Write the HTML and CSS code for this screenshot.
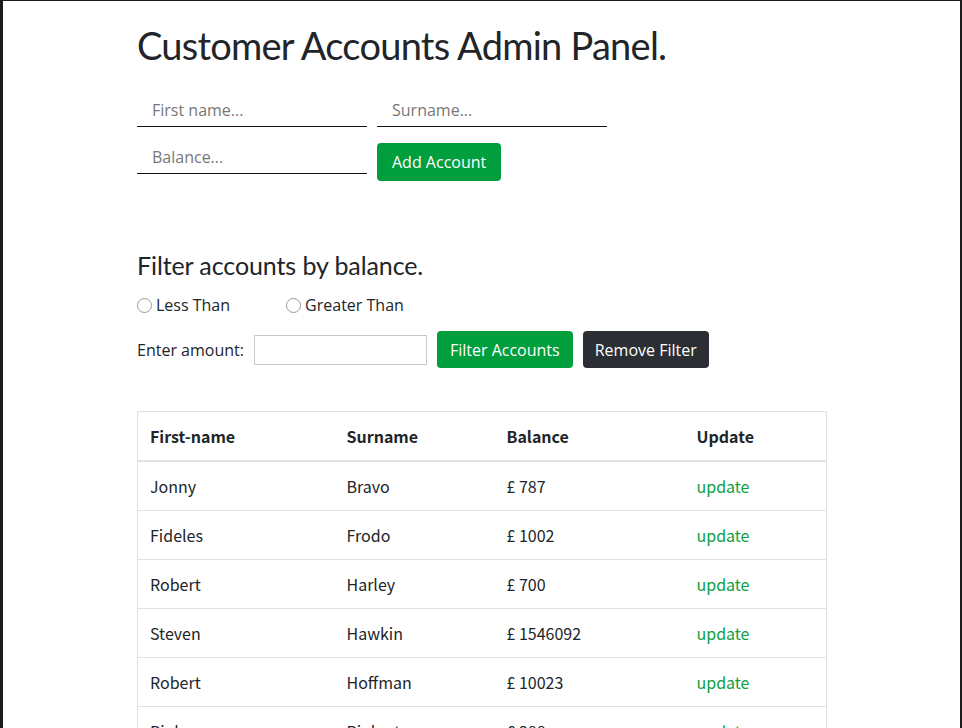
FILE: index.html
```html
<!DOCTYPE html>
<html>
<head>
<meta charset="utf-8">
<link rel="stylesheet" href="styles.css">
</head>
<body>
<div class="frame">
  <div class="container">
    <h1 class="title">Customer Accounts Admin Panel.</h1>
    <div class="add-form">
      <div class="form-row">
        <input class="line-input" type="text" placeholder="First name...">
        <input class="line-input" type="text" placeholder="Surname...">
      </div>
      <div class="form-row">
        <input class="line-input" type="text" placeholder="Balance...">
        <button class="btn btn-green btn-add">Add Account</button>
      </div>
    </div>

    <h2 class="subtitle">Filter accounts by balance.</h2>
    <div class="radios">
      <label class="radio"><span class="radio-circle"></span>Less Than</label>
      <label class="radio radio-second"><span class="radio-circle"></span>Greater Than</label>
    </div>
    <div class="filter-row">
      <span class="amount-label">Enter amount:</span>
      <input class="box-input" type="text">
      <button class="btn btn-green">Filter Accounts</button>
      <button class="btn btn-dark">Remove Filter</button>
    </div>

    <table class="accounts">
      <colgroup>
        <col class="c1"><col class="c2"><col class="c3"><col class="c4">
      </colgroup>
      <thead>
        <tr><th>First-name</th><th>Surname</th><th>Balance</th><th>Update</th></tr>
      </thead>
      <tbody>
        <tr><td>Jonny</td><td>Bravo</td><td>£ 787</td><td><a class="upd">update</a></td></tr>
        <tr><td>Fideles</td><td>Frodo</td><td>£ 1002</td><td><a class="upd">update</a></td></tr>
        <tr><td>Robert</td><td>Harley</td><td>£ 700</td><td><a class="upd">update</a></td></tr>
        <tr><td>Steven</td><td>Hawkin</td><td>£ 1546092</td><td><a class="upd">update</a></td></tr>
        <tr><td>Robert</td><td>Hoffman</td><td>£ 10023</td><td><a class="upd">update</a></td></tr>
        <tr><td>Pinky</td><td>Pinkerton</td><td>£ 388</td><td><a class="upd">update</a></td></tr>
      </tbody>
    </table>
  </div>
</div>
</body>
</html>
```

FILE: styles.css
```css
html, body {
  margin: 0;
  padding: 0;
  height: 100%;
  overflow: hidden;
}
body {
  background: #ffffff;
  font-family: "Open Sans", "Noto Sans", sans-serif;
  color: #212529;
  font-size: 16px;
}
.frame {
  box-sizing: border-box;
  min-height: 728px;
  border-top: 1px solid #1c1c1c;
  border-left: 3px solid #1c1c1c;
  border-right: 2px solid #1c1c1c;
}
.container {
  padding-left: 134px;
  padding-top: 20px;
}
.title {
  font-family: "Lato", sans-serif;
  font-weight: 400;
  font-size: 38px;
  line-height: 48px;
  margin: 0 0 25px 0;
  letter-spacing: -0.75px;
}
.add-form {
  display: flex;
  flex-direction: column;
  gap: 14px;
}
.form-row {
  display: flex;
  gap: 10px;
  align-items: flex-end;
}
.line-input {
  box-sizing: border-box;
  width: 230px;
  height: 33px;
  border: none;
  border-bottom: 1.5px solid #111;
  padding: 0 0 0 15px;
  font-family: "Open Sans", sans-serif;
  font-size: 16px;
  outline: none;
  background: transparent;
}
.line-input::placeholder {
  color: #777;
}
.btn {
  box-sizing: border-box;
  height: 38px;
  padding: 0 13px;
  border: none;
  border-radius: 4px;
  color: #fff;
  font-family: "Open Sans", sans-serif;
  font-size: 16px;
}
.btn-add {
  margin-bottom: -7px;
  padding: 0 15px;
}
.btn-green {
  background: #009e3d;
}
.btn-dark {
  background: #2b2f34;
  padding: 0 12px;
}
.subtitle {
  font-family: "Lato", sans-serif;
  font-weight: 400;
  font-size: 25px;
  line-height: 32px;
  margin: 75px 0 12px 0;
  letter-spacing: -0.1px;
}
.radios {
  display: flex;
  align-items: center;
  height: 24px;
}
.radio {
  display: flex;
  align-items: center;
  gap: 4px;
  font-size: 16px;
}
.radio-second {
  margin-left: 56px;
}
.radio-circle {
  box-sizing: border-box;
  width: 15px;
  height: 15px;
  border: 1px solid #9a9a9a;
  border-radius: 50%;
  background: #fff;
}
.filter-row {
  display: flex;
  align-items: center;
  gap: 10px;
  margin-top: 14px;
}
.amount-label {
  font-size: 16px;
}
.box-input {
  box-sizing: border-box;
  width: 173px;
  height: 30px;
  border: 1px solid #c8c8c8;
  outline: none;
}
.filter-row .btn {
  height: 37px;
}
.accounts {
  margin-top: 43px;
  width: 689px;
  border-collapse: collapse;
  border: 1px solid #dee2e6;
  font-family: "Noto Sans CJK KR", "Open Sans", sans-serif;
  font-size: 16px;
  table-layout: fixed;
}
.c1 { width: 197px; }
.c2 { width: 160px; }
.c3 { width: 190px; }
.c4 { width: 142px; }
.accounts th, .accounts td {
  text-align: left;
  padding: 12px 12px;
  line-height: 24px;
  border-top: 1px solid #dee2e6;
}
.accounts th {
  font-weight: 600;
  border-bottom: 2px solid #dee2e6;
}
.accounts td {
  font-weight: 400;
}
.upd {
  color: #0fa03f;
}
```
